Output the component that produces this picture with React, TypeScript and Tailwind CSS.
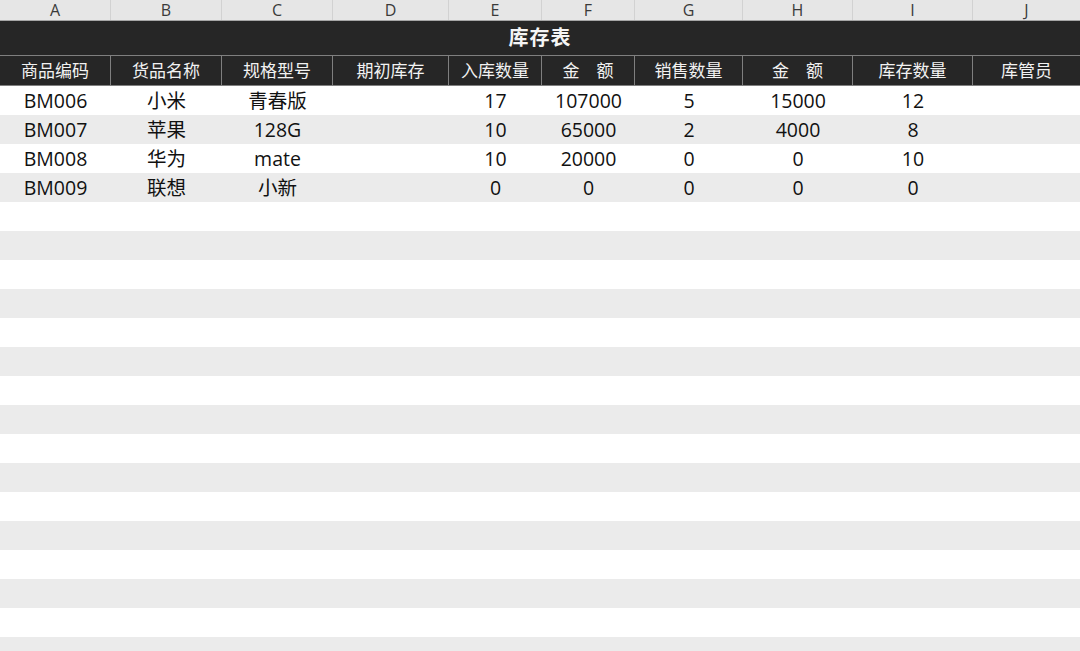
import React from 'react';

const columns = ['A', 'B', 'C', 'D', 'E', 'F', 'G', 'H', 'I', 'J'];

const headers = ['商品编码', '货品名称', '规格型号', '期初库存', '入库数量', '金　额', '销售数量', '金　额', '库存数量', '库管员'];

const rows = [
  ['BM006', '小米', '青春版', '', '17', '107000', '5', '15000', '12', ''],
  ['BM007', '苹果', '128G', '', '10', '65000', '2', '4000', '8', ''],
  ['BM008', '华为', 'mate', '', '10', '20000', '0', '0', '10', ''],
  ['BM009', '联想', '小新', '', '0', '0', '0', '0', '0', ''],
];

const gridCols = 'grid grid-cols-[111px_111px_111px_116px_93px_93px_108px_110px_120px_108px]';
const font = { fontFamily: '"Open Sans", "Noto Sans CJK SC", sans-serif' };

export default function App() {
  const emptyRows = Array.from({ length: 16 });

  return (
    <div className="w-[1080px] h-[651px] overflow-hidden bg-white text-[#111111]" style={font}>
      {/* column letters */}
      <div className={`${gridCols} h-[21px] bg-[#e6e6e6] border-b border-[#a6a6a6]`}>
        {columns.map((c) => (
          <div
            key={c}
            className="flex items-center justify-center border-r border-[#d2d2d2] text-[16px] leading-none text-[#3a3a3a]"
          >
            {c}
          </div>
        ))}
      </div>

      {/* title */}
      <div className="h-[35px] bg-[#262626] flex items-center justify-center border-b border-[#7f7f7f]">
        <span className="text-[20px] font-bold text-[#f5f5f5] tracking-[1px]">库存表</span>
      </div>

      {/* header row */}
      <div className={`${gridCols} h-[30px] bg-[#262626] border-b border-[#7f7f7f]`}>
        {headers.map((h, i) => (
          <div
            key={i}
            className="flex items-center justify-center border-r border-[#7f7f7f] text-[17px] text-[#f2f2f2] leading-none"
          >
            {h}
          </div>
        ))}
      </div>

      {/* data */}
      {rows.map((r, i) => (
        <div key={i} className={`${gridCols} h-[29px] ${i % 2 === 1 ? 'bg-[#ebebeb]' : 'bg-white'}`}>
          {r.map((v, j) => (
            <div key={j} className="flex items-center justify-center text-[19.5px] leading-none">
              {v}
            </div>
          ))}
        </div>
      ))}

      {emptyRows.map((_, i) => (
        <div key={i} className={`h-[29px] ${i % 2 === 1 ? 'bg-[#ebebeb]' : 'bg-white'}`} />
      ))}
    </div>
  );
}
